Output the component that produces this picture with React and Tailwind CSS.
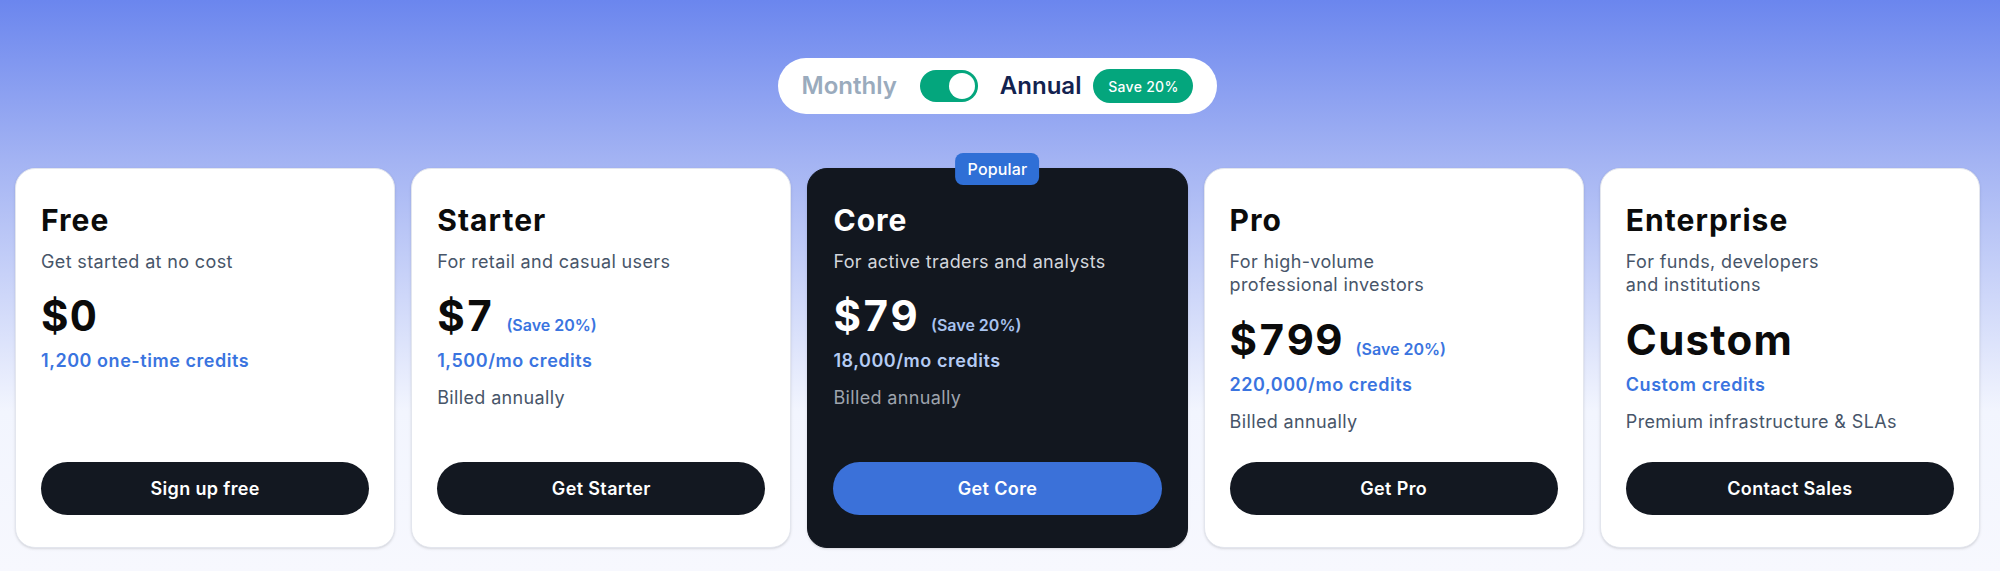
const plans = [
  {
    name: 'Free',
    desc: ['Get started at no cost'],
    price: '$0',
    credits: '1,200 one-time credits',
    cta: 'Sign up free',
  },
  {
    name: 'Starter',
    desc: ['For retail and casual users'],
    price: '$7',
    save: true,
    credits: '1,500/mo credits',
    note: 'Billed annually',
    cta: 'Get Starter',
  },
  {
    name: 'Core',
    desc: ['For active traders and analysts'],
    price: '$79',
    save: true,
    credits: '18,000/mo credits',
    note: 'Billed annually',
    cta: 'Get Core',
    popular: true,
  },
  {
    name: 'Pro',
    desc: ['For high-volume', 'professional investors'],
    price: '$799',
    save: true,
    credits: '220,000/mo credits',
    note: 'Billed annually',
    cta: 'Get Pro',
  },
  {
    name: 'Enterprise',
    desc: ['For funds, developers', 'and institutions'],
    price: 'Custom',
    credits: 'Custom credits',
    note: 'Premium infrastructure & SLAs',
    cta: 'Contact Sales',
  },
];

const BillingToggle = () => {
  return (
    <div className="flex h-[56px] items-center rounded-full bg-white px-6">
      <span className="text-[24px] font-semibold leading-none text-[#9aabbd]">Monthly</span>
      <div className="ml-[23px] flex h-[32px] w-[58px] items-center justify-end rounded-full bg-[#04a67d] px-[3px]">
        <div className="h-[26px] w-[26px] rounded-full bg-white" />
      </div>
      <span className="ml-[22px] text-[24px] font-semibold leading-none text-[#12224f]">Annual</span>
      <span className="ml-3 flex h-[34px] w-[100px] items-center justify-center rounded-full bg-[#04a67d] text-[14px] font-medium tracking-[0.02em] text-white">
        Save 20%
      </span>
    </div>
  );
};

const PlanCard = ({ plan }) => {
  const dark = plan.popular;
  return (
    <div
      className={
        dark
          ? 'relative flex flex-col rounded-[20px] border border-[#12171f] bg-[#12171f] px-[25px] pt-[33px] pb-[32px] shadow-sm'
          : 'relative flex flex-col rounded-[20px] border border-[#e3e6ee] bg-white px-[25px] pt-[33px] pb-[32px] shadow-sm'
      }
    >
      {plan.popular && (
        <div className="absolute -top-4 left-1/2 flex h-8 -translate-x-1/2 items-center rounded-lg bg-[#2f6fd6] px-3 text-[16px] font-medium tracking-[0.01em] text-white">
          Popular
        </div>
      )}
      <div className="flex-1">
        <h3
          className={
            dark
              ? 'text-[30px] font-bold leading-[36px] tracking-[0.035em] text-white'
              : 'text-[30px] font-bold leading-[36px] tracking-[0.035em] text-[#0b0b0b]'
          }
        >
          {plan.name}
        </h3>
        <p
          className={
            dark
              ? 'mt-3 text-[18px] leading-[23.4px] tracking-[0.02em] text-[#d3d6dc]'
              : 'mt-3 text-[18px] leading-[23.4px] tracking-[0.02em] text-[#475569]'
          }
        >
          {plan.desc.map((line, i) => (
            <span key={i} className="block">
              {line}
            </span>
          ))}
        </p>
        <div className="mt-[22px] flex items-baseline gap-3">
          <span
            className={
              dark
                ? 'text-[42px] font-bold leading-none tracking-[0.03em] tabular-nums text-white'
                : 'text-[42px] font-bold leading-none tracking-[0.03em] tabular-nums text-[#0b0b0b]'
            }
          >
            {plan.price}
          </span>
          {plan.save && (
            <span className={dark ? 'text-[16px] font-semibold text-[#a9c3ef]' : 'text-[16px] font-semibold text-[#3a74e0]'}>
              (Save 20%)
            </span>
          )}
        </div>
        <p
          className={
            dark
              ? 'mt-[10px] text-[18px] font-semibold leading-7 tracking-[0.03em] text-[#b5ccf4]'
              : 'mt-[10px] text-[18px] font-semibold leading-7 tracking-[0.03em] text-[#3a74e0]'
          }
        >
          {plan.credits}
        </p>
        {plan.note && (
          <p
            className={
              dark
                ? 'mt-[9px] text-[18px] leading-7 tracking-[0.02em] text-[#9ea4ad]'
                : 'mt-[9px] text-[18px] leading-7 tracking-[0.02em] text-[#475569]'
            }
          >
            {plan.note}
          </p>
        )}
      </div>
      <button
        className={
          dark
            ? 'mt-[26px] h-[53px] w-full rounded-full bg-[#3b71d9] text-[18px] font-semibold tracking-[0.02em] text-white'
            : 'mt-[26px] h-[53px] w-full rounded-full bg-[#131821] text-[18px] font-semibold tracking-[0.02em] text-white'
        }
      >
        {plan.cta}
      </button>
    </div>
  );
};

export default function App() {
  return (
    <div className="min-h-[571px] w-full bg-[linear-gradient(180deg,#6b86ee_0%,#a3b3f3_28%,#f2f5fe_72%,#f7f8fe_100%)] pt-[58px] pr-[20px] pl-[15px] font-['Inter',sans-serif]">
      <div className="flex justify-center">
        <BillingToggle />
      </div>
      <div className="mt-[54px] grid grid-cols-5 gap-4">
        {plans.map((plan) => (
          <PlanCard plan={plan} key={plan.name} />
        ))}
      </div>
    </div>
  );
}
